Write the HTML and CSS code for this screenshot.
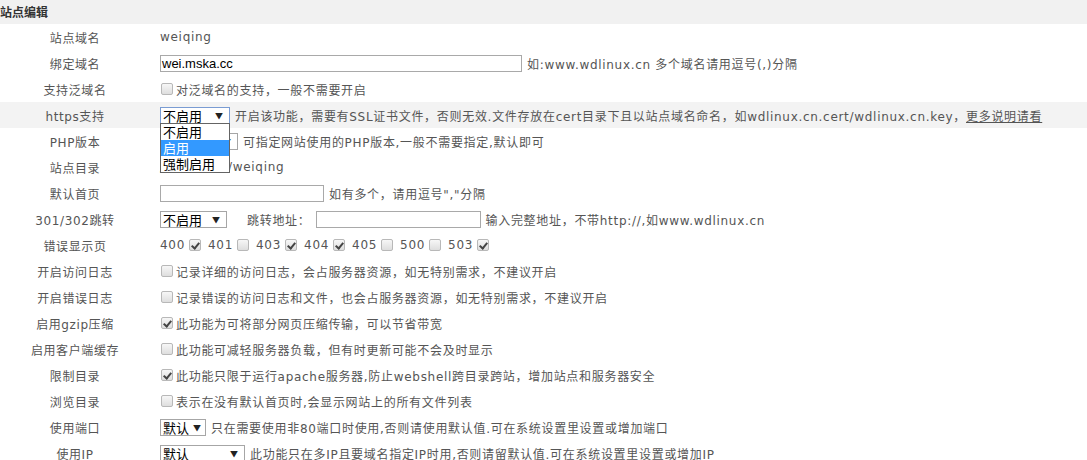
FILE: index.html
```html
<!DOCTYPE html>
<html lang="zh-CN">
<head>
  <meta charset="UTF-8" />
  <title>站点编辑</title>
  <link rel="stylesheet" href="styles.css">
</head>
<body>

  <div class="title">站点编辑</div>

  <div class="form">
    <div class="row">
      <div class="label">站点域名</div>
      <div class="val">weiqing</div>
    </div>
    <div class="row">
      <div class="label">绑定域名</div>
      <div class="val">
        <span class="input w-domain">wei.mska.cc</span>
        <span class="tip">如:www.wdlinux.cn 多个域名请用逗号(,)分隔</span>
      </div>
    </div>
    <div class="row">
      <div class="label">支持泛域名</div>
      <div class="val"><span class="cb"></span>对泛域名的支持，一般不需要开启</div>
    </div>
    <div class="row hover">
      <div class="label">https支持</div>
      <div class="val">
        <div class="sel-wrap">
          <span class="sel focus w-https">不启用<i>▼</i></span>
          <ul class="dropdown">
            <li>不启用</li>
            <li class="active">启用</li>
            <li>强制启用</li>
          </ul>
        </div>
        <span class="tip">开启该功能，需要有SSL证书文件，否则无效.文件存放在cert目录下且以站点域名命名，如wdlinux.cn.cert/wdlinux.cn.key，<u>更多说明请看</u></span>
      </div>
    </div>
    <div class="row">
      <div class="label">PHP版本</div>
      <div class="val">
        <span class="sel w-php">默认<i>▼</i></span>
        <span class="tip">可指定网站使用的PHP版本,一般不需要指定,默认即可</span>
      </div>
    </div>
    <div class="row">
      <div class="label">站点目录</div>
      <div class="val">/www/web/weiqing</div>
    </div>
    <div class="row">
      <div class="label">默认首页</div>
      <div class="val">
        <span class="input w-index"></span>
        <span class="tip">如有多个，请用逗号","分隔</span>
      </div>
    </div>
    <div class="row">
      <div class="label">301/302跳转</div>
      <div class="val">
        <span class="sel w-301">不启用<i>▼</i></span>
        <span class="tip pad">跳转地址：</span>
        <span class="input w-url"></span>
        <span class="tip">输入完整地址，不带http://,如www.wdlinux.cn</span>
      </div>
    </div>
    <div class="row">
      <div class="label">错误显示页</div>
      <div class="val codes">
        <span>400<span class="cb on"></span></span>
        <span>401<span class="cb"></span></span>
        <span>403<span class="cb on"></span></span>
        <span>404<span class="cb on"></span></span>
        <span>405<span class="cb"></span></span>
        <span>500<span class="cb"></span></span>
        <span>503<span class="cb on"></span></span>
      </div>
    </div>
    <div class="row">
      <div class="label">开启访问日志</div>
      <div class="val"><span class="cb"></span>记录详细的访问日志，会占服务器资源，如无特别需求，不建议开启</div>
    </div>
    <div class="row">
      <div class="label">开启错误日志</div>
      <div class="val"><span class="cb"></span>记录错误的访问日志和文件，也会占服务器资源，如无特别需求，不建议开启</div>
    </div>
    <div class="row">
      <div class="label">启用gzip压缩</div>
      <div class="val"><span class="cb on"></span>此功能为可将部分网页压缩传输，可以节省带宽</div>
    </div>
    <div class="row">
      <div class="label">启用客户端缓存</div>
      <div class="val"><span class="cb"></span>此功能可减轻服务器负载，但有时更新可能不会及时显示</div>
    </div>
    <div class="row">
      <div class="label">限制目录</div>
      <div class="val"><span class="cb on"></span>此功能只限于运行apache服务器,防止webshell跨目录跨站，增加站点和服务器安全</div>
    </div>
    <div class="row">
      <div class="label">浏览目录</div>
      <div class="val"><span class="cb"></span>表示在没有默认首页时,会显示网站上的所有文件列表</div>
    </div>
    <div class="row">
      <div class="label">使用端口</div>
      <div class="val">
        <span class="sel w-port">默认<i>▼</i></span>
        <span class="tip">只在需要使用非80端口时使用,否则请使用默认值.可在系统设置里设置或增加端口</span>
      </div>
    </div>
    <div class="row">
      <div class="label">使用IP</div>
      <div class="val">
        <span class="sel w-ip">默认<i>▼</i></span>
        <span class="tip">此功能只在多IP且要域名指定IP时用,否则请留默认值.可在系统设置里设置或增加IP</span>
      </div>
    </div>
  </div>

</body>
</html>
```

FILE: styles.css
```css
* { box-sizing: border-box; }
body {
  margin: 0;
  background: #fff;
  color: #555;
  font-family: "DejaVu Sans", "Noto Sans CJK SC", sans-serif;
  font-size: 12px;
  letter-spacing: 0.7px;
  overflow: hidden;
}

.title {
  height: 24px;
  line-height: 24px;
  background: #f1f1f1;
  color: #333;
  font-weight: bold;
  font-family: "Noto Sans CJK SC", sans-serif;
  letter-spacing: 0;
}

.row {
  display: flex;
  align-items: center;
  height: 26px;
}
.row.hover { background: #f3f3f3; }

.label {
  width: 150px;
  text-align: center;
  letter-spacing: 0.6px;
}

.val {
  display: flex;
  align-items: center;
  padding-left: 10px;
  white-space: nowrap;
}

.tip { margin-left: 5px; }
.tip.pad { margin-left: 20px; margin-right: 5px; }
u { text-decoration: underline; }

/* text boxes */
.input {
  display: inline-block;
  height: 17px;
  line-height: 15px;
  border: 1px solid #a9a9a9;
  background: #fff;
  color: #000;
  font-family: "Liberation Sans", sans-serif;
  font-size: 13px;
  letter-spacing: 0;
  padding-left: 1px;
}
.w-domain { width: 362px; }
.w-index { width: 164px; }
.w-url { width: 165px; }

/* select boxes */
.sel {
  display: inline-flex;
  align-items: center;
  justify-content: space-between;
  height: 17px;
  border: 1px solid #a6a6a6;
  background: #fff;
  color: #000;
  font-family: "Noto Sans CJK SC", sans-serif;
  font-size: 13px;
  letter-spacing: 0;
  padding: 0 6px 0 2px;
  line-height: 15px;
}
.sel i {
  font-style: normal;
  font-size: 8px;
  color: #222;
}
.sel.focus { border-color: #7a9cd3; }
.w-https { width: 70px; }
.w-php { width: 78px; }
.w-301 { width: 67px; }
.w-port { width: 46px; padding-right: 4px; }
.w-ip { width: 85px; }

.sel-wrap { position: relative; }

.dropdown {
  position: absolute;
  left: 0;
  top: 16px;
  width: 70px;
  margin: 0;
  padding: 0;
  list-style: none;
  background: #fff;
  border: 1px solid #646464;
  z-index: 5;
}
.dropdown li {
  height: 16px;
  line-height: 16px;
  padding-left: 2px;
  color: #000;
  font-family: "Noto Sans CJK SC", sans-serif;
  font-size: 13px;
  letter-spacing: 0;
}
.dropdown li.active {
  background: #3399ff;
  color: #fff;
}

/* checkboxes */
.cb {
  position: relative;
  display: inline-block;
  width: 12px;
  height: 12px;
  margin: 0 3px 0 1px;
  border: 1px solid #b8b8b8;
  border-radius: 2px;
  background: linear-gradient(#f7f7f7, #dedede);
}
.cb.on::after {
  content: "";
  position: absolute;
  left: 3px;
  top: 1px;
  width: 3px;
  height: 6px;
  border-right: 2px solid #444;
  border-bottom: 2px solid #444;
  transform: rotate(40deg);
}

.codes { gap: 4px; }
.codes > span {
  display: inline-flex;
  align-items: center;
}
.codes .cb { margin-left: 4px; }
```
